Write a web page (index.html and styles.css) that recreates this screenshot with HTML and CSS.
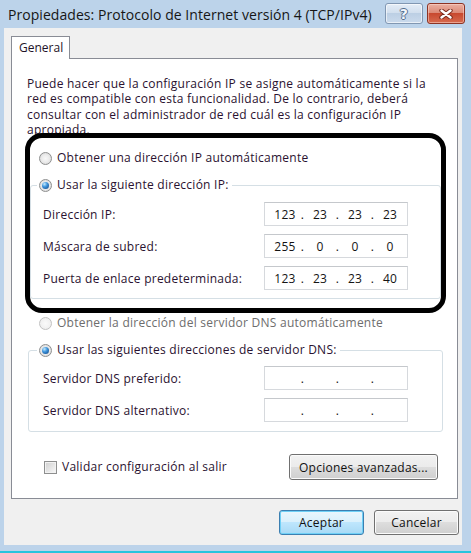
FILE: index.html
```html
<!DOCTYPE html>
<html lang="es">
<head>
    <meta charset="UTF-8">
    <title>Propiedades: Protocolo de Internet versión 4 (TCP/IPv4)</title>
    <link rel="stylesheet" href="styles.css">
</head>
<body>

<div class="window">
    <!--barra de título-->
    <div class="titlebar">
        <span class="title">Propiedades: Protocolo de Internet versión 4 (TCP/IPv4)</span>
        <div class="caption-btns">
            <span class="cap-btn cap-help">?</span>
            <span class="cap-btn cap-close">
                <svg width="14" height="10" viewBox="0 0 14 10">
                    <path d="M2.5 1.5 L11.5 8.5 M11.5 1.5 L2.5 8.5" stroke="#7a2a1c" stroke-width="4.4" stroke-linecap="round"/>
                    <path d="M2.5 1.5 L11.5 8.5 M11.5 1.5 L2.5 8.5" stroke="#ffffff" stroke-width="2.4" stroke-linecap="round"/>
                </svg>
            </span>
        </div>
    </div>

    <div class="client">
        <div class="tabs">
            <span class="tab current">General</span>
        </div>

        <div class="panel">
            <p class="intro">Puede hacer que la configuración IP se asigne automáticamente si la red es compatible con esta funcionalidad. De lo contrario, deberá consultar con el administrador de red cuál es la configuración IP apropiada.</p>

            <!--recuadro marcado-->
            <div class="highlight">
                <div class="option option-in"><span class="radio"></span>Obtener una dirección IP automáticamente</div>
                <fieldset class="group group-ip">
                    <legend class="option"><span class="radio checked"></span>Usar la siguiente dirección IP:</legend>
                    <div class="rows">
                        <div class="row">
                            <span>Dirección IP:</span>
                            <span class="ip"><span class="oct">123</span><span class="dot">.</span><span class="oct">23</span><span class="dot">.</span><span class="oct">23</span><span class="dot">.</span><span class="oct">23</span></span>
                        </div>
                        <div class="row">
                            <span>Máscara de subred:</span>
                            <span class="ip"><span class="oct">255</span><span class="dot">.</span><span class="oct">0</span><span class="dot">.</span><span class="oct">0</span><span class="dot">.</span><span class="oct">0</span></span>
                        </div>
                        <div class="row">
                            <span>Puerta de enlace predeterminada:</span>
                            <span class="ip"><span class="oct">123</span><span class="dot">.</span><span class="oct">23</span><span class="dot">.</span><span class="oct">23</span><span class="dot">.</span><span class="oct">40</span></span>
                        </div>
                    </div>
                </fieldset>
            </div>

            <div class="option option-out disabled"><span class="radio off"></span>Obtener la dirección del servidor DNS automáticamente</div>
            <fieldset class="group group-dns">
                <legend class="option"><span class="radio checked"></span>Usar las siguientes direcciones de servidor DNS:</legend>
                <div class="rows">
                    <div class="row">
                        <span>Servidor DNS preferido:</span>
                        <span class="ip"><span class="oct"></span><span class="dot">.</span><span class="oct"></span><span class="dot">.</span><span class="oct"></span><span class="dot">.</span><span class="oct"></span></span>
                    </div>
                    <div class="row">
                        <span>Servidor DNS alternativo:</span>
                        <span class="ip"><span class="oct"></span><span class="dot">.</span><span class="oct"></span><span class="dot">.</span><span class="oct"></span><span class="dot">.</span><span class="oct"></span></span>
                    </div>
                </div>
            </fieldset>

            <div class="panel-foot">
                <label class="option"><span class="check"></span>Validar configuración al salir</label>
                <span class="btn btn-wide">Opciones avanzadas...</span>
            </div>
        </div>

        <div class="actions">
            <span class="btn btn-default">Aceptar</span>
            <span class="btn">Cancelar</span>
        </div>
    </div>
</div>

</body>
</html>
```

FILE: styles.css
```css
* {
    margin: 0;
    padding: 0;
    box-sizing: border-box;
}

body {
    width: 471px;
    height: 553px;
    overflow: hidden;
    font-family: "Open Sans", "Noto Sans", sans-serif;
    font-size: 12px;
    letter-spacing: 0.25px;
    color: #2a1230;
}

/*marco de la ventana*/
.window {
    width: 471px;
    height: 553px;
    background-color: #bcd3ea;
    border-bottom: 2px solid #2ac4dd;
}

.titlebar {
    height: 28px;
    display: flex;
    padding: 0 6px 0 8px;
}

.title {
    flex: 1;
    font-size: 14px;
    letter-spacing: 0.05px;
    line-height: 30px;
    color: #161616;
}

.caption-btns {
    display: flex;
    gap: 4px;
    padding-top: 3px;
}

.cap-btn {
    width: 38px;
    height: 21px;
    border: 1px solid #8197b2;
    border-radius: 3px;
    display: flex;
    align-items: center;
    justify-content: center;
}

.cap-help {
    background: linear-gradient(#e4edf7, #d2dfee 45%, #bccfe4 50%, #cadaec);
    box-shadow: inset 0 0 0 1px rgba(255, 255, 255, 0.6);
    font: bold 14px "DejaVu Sans", sans-serif;
    color: #f2f6fb;
    text-shadow: 1px 0 #556f8e, -1px 0 #556f8e, 0 1px #556f8e, 0 -1px #556f8e;
}

.cap-close {
    border-color: #8c3324;
    background: linear-gradient(#eab0a2, #dc8a77 45%, #c8492f 50%, #d66a4f);
    box-shadow: inset 0 0 0 1px rgba(255, 220, 210, 0.5);
}

/*área cliente*/
.client {
    margin: 0 9px 0 4px;
    height: 517px;
    background-color: #f0f0f0;
    padding: 8px 0 0 7px;
}

.tabs {
    height: 23px;
}

.tab {
    position: relative;
    display: inline-block;
    width: 59px;
    height: 23px;
    padding-left: 7px;
    line-height: 21px;
    letter-spacing: 0;
    background-color: #fff;
    border: 1px solid #898c95;
    border-bottom: none;
    color: #1e1428;
}

.panel {
    width: 447px;
    height: 441px;
    margin-top: -1px;
    padding: 17px 15px 0 15px;
    background-color: #fff;
    border: 1px solid #898c95;
}

.intro {
    padding-right: 12px;
    line-height: 15.3px;
}

/*recuadro negro*/
.highlight {
    position: relative;
    width: 421px;
    margin: -4px 0 0 -2px;
    padding: 12px 0 9px 0;
    background-color: #fff;
    border: 5px solid #000;
    border-radius: 17px;
}

.option {
    display: flex;
    align-items: center;
    height: 16px;
    line-height: 16px;
}

.option-in .radio {
    margin-left: 9px;
}

.option-out {
    margin-top: 2px;
}

.option-out .radio {
    margin-left: 12px;
}

.disabled {
    color: #6d6d6d;
}

.radio {
    flex: none;
    width: 13px;
    height: 13px;
    margin-right: 5px;
    border-radius: 50%;
    border: 1px solid #8e8f8f;
    background: radial-gradient(circle, #f8f8f8 0, #ececec 45%, #d0d0d0 100%);
    display: flex;
    align-items: center;
    justify-content: center;
}

.radio.checked::after {
    content: "";
    width: 7px;
    height: 7px;
    border-radius: 50%;
    background: radial-gradient(circle at 35% 30%, #c4ebff 0, #3f95dc 40%, #0c3f7e 100%);
}

.radio.off {
    border-color: #c2c2c2;
    background: radial-gradient(circle, #fafafa 0, #f1f1f1 60%, #e4e4e4 100%);
}

.group {
    min-width: 0;
    border: 1px solid #d5dfe5;
    border-radius: 3px;
}

.group legend {
    padding: 0 3px 0 2px;
}

.group-ip {
    margin-top: 11px;
}

.group-ip legend {
    margin-left: 6px;
}

.group-ip .rows {
    padding: 9px 32px 8px 12px;
}

.group-dns {
    width: 415px;
    margin: 11px 0 0 1px;
}

.group-dns legend {
    margin-left: 8px;
}

.group-dns .rows {
    padding: 8px 34px 9px 14px;
}

.rows {
    display: flex;
    flex-direction: column;
    gap: 8px;
}

.row {
    display: flex;
    align-items: center;
    justify-content: space-between;
    height: 24px;
}

/*campo de dirección IP*/
.ip {
    display: flex;
    align-items: center;
    width: 144px;
    height: 24px;
    padding-left: 7px;
    border: 1px solid #d6d9dd;
    border-top-color: #c5c8cc;
    color: #141414;
}

.oct {
    width: 26px;
    text-align: center;
}

.dot {
    width: 9px;
    text-align: center;
}

.panel-foot {
    display: flex;
    align-items: center;
    justify-content: space-between;
    margin-top: 22px;
    padding: 0 4px 0 17px;
}

.check {
    flex: none;
    width: 13px;
    height: 13px;
    margin-right: 5px;
    border: 1px solid #8e8f8f;
    background: linear-gradient(135deg, #cfcfcf, #f9f9f9);
    box-shadow: inset 0 0 0 1px #f2f2f2;
}

/*botones*/
.btn {
    display: flex;
    align-items: center;
    justify-content: center;
    width: 85px;
    height: 25px;
    border: 1px solid #707070;
    border-radius: 3px;
    background: linear-gradient(#f2f2f2, #ebebeb 50%, #dddddd 50%, #cfcfcf);
    box-shadow: inset 0 0 0 1px #fbfbfb;
    color: #111;
}

.btn-wide {
    width: 149px;
    height: 26px;
}

.btn-default {
    border-color: #3c7fb1;
    background: linear-gradient(#eaf6fd, #d9f0fc 50%, #bee6fd 50%, #a7d9f5);
    box-shadow: inset 0 0 0 1px #6fd0f6;
}

.actions {
    display: flex;
    justify-content: flex-end;
    gap: 10px;
    margin-top: 11px;
    padding-right: 3px;
}
```
